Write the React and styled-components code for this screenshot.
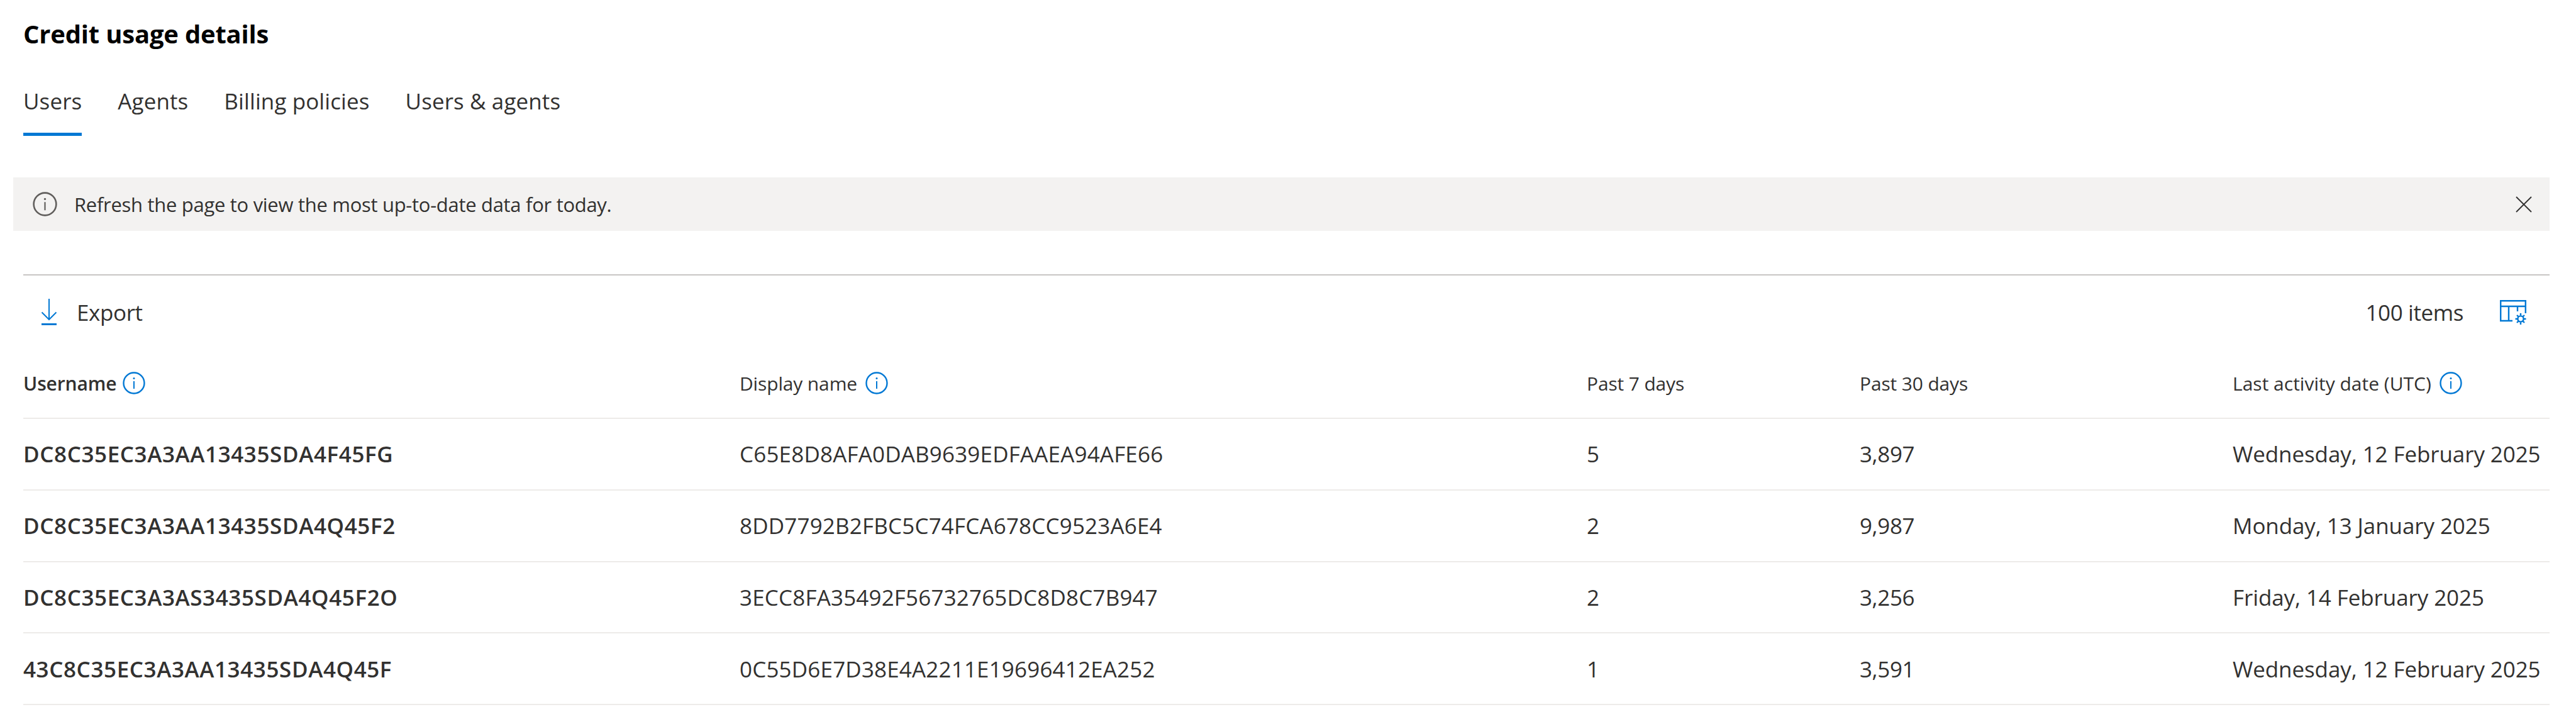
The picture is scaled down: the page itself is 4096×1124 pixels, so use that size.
import React from 'react'
import styled, { createGlobalStyle } from 'styled-components'

const GlobalStyle = createGlobalStyle`
  html, body {
    margin: 0;
    padding: 0;
    background: #fff;
  }
  body {
    font-family: "Open Sans", "Noto Sans", sans-serif;
    color: #323130;
    overflow: hidden;
  }
`

const COLUMNS = '1139px 1347px 434px 593px 504px'

const Page = styled.div`
  width: 4096px;
  height: 1124px;
  box-sizing: border-box;
  padding: 0 42px 0 37px;
  display: flex;
  flex-direction: column;
`

const Title = styled.h1`
  margin: 0;
  height: 74px;
  box-sizing: border-box;
  display: flex;
  align-items: center;
  padding-top: 32px;
  font-size: 40px;
  font-weight: 700;
  letter-spacing: -0.2px;
  color: #000;
`

const TabBar = styled.div`
  display: flex;
  gap: 57px;
  margin-top: 44px;
`

const Tab = styled.div`
  height: 98px;
  box-sizing: border-box;
  padding-top: 19px;
  display: flex;
  align-items: flex-start;
  font-size: 35px;
  line-height: 48px;
  letter-spacing: 0.1px;
  border-bottom: 5px solid ${(p) => (p.$active ? '#0078d4' : 'transparent')};
`

const Banner = styled.div`
  margin: 66px 0 0 -16px;
  height: 85px;
  background: #f3f2f1;
  display: flex;
  align-items: center;
  padding: 0 28px 0 31px;
  gap: 27px;
  font-size: 31px;
  letter-spacing: -0.3px;
`

const BannerText = styled.span`
  flex: 1;
`

const Divider = styled.div`
  margin-top: 69px;
  height: 2px;
  background: #c8c6c4;
`

const Toolbar = styled.div`
  height: 106px;
  box-sizing: border-box;
  padding: 10px 0 0 28px;
  display: flex;
  align-items: center;
  font-size: 35px;
  letter-spacing: -0.4px;
`

const ExportButton = styled.div`
  display: flex;
  align-items: center;
  gap: 31px;
`

const ItemCount = styled.div`
  margin-left: auto;
  margin-right: 58px;
`

const SettingsIcon = styled.svg`
  width: 42px;
  height: 39px;
  margin-right: 37px;
`

const Row = styled.div`
  display: grid;
  grid-template-columns: ${COLUMNS};
  align-items: center;
  height: ${(p) => (p.$head ? '122px' : '113.8px')};
  padding-top: ${(p) => (p.$head ? '10px' : '0')};
  box-sizing: border-box;
  border-bottom: 2px solid #edebe9;
`

const HeadCell = styled.div`
  display: flex;
  align-items: center;
  gap: ${(p) => (p.$strong ? '10px' : '13px')};
  font-size: 30px;
  letter-spacing: ${(p) => p.$spacing || '-0.15px'};
  font-weight: ${(p) => (p.$strong ? 600 : 400)};
`

const Cell = styled.div`
  font-size: 35px;
  letter-spacing: ${(p) => p.$spacing || '-0.4px'};
  white-space: nowrap;
  font-weight: ${(p) => (p.$strong ? 600 : 400)};
`

const Glyph = styled.svg`
  display: block;
  flex: none;
`

const InfoIcon = ({ color = '#0078d4', size = 36 }) => (
  <Glyph width={size} height={size} viewBox="0 0 36 36" fill="none">
    <circle cx="18" cy="18" r="16.5" stroke={color} strokeWidth="2.4" />
    <rect x="17" y="15" width="2" height="12" fill={color} />
    <circle cx="18" cy="10.5" r="1.5" fill={color} />
  </Glyph>
)

const CloseIcon = () => (
  <Glyph width="26" height="26" viewBox="0 0 26 26" fill="none">
    <path d="M1 1l24 24M25 1L1 25" stroke="#323130" strokeWidth="1.8" />
  </Glyph>
)

const ExportIcon = () => (
  <Glyph width="26" height="43" viewBox="0 0 26 43" fill="none">
    <path d="M13 0v33M1.5 21.5L13 33l11.5-11.5" stroke="#0078d4" strokeWidth="2" />
    <rect x="1" y="39" width="24" height="3" fill="#0078d4" />
  </Glyph>
)

const rows = [
  ['DC8C35EC3A3AA13435SDA4F45FG', 'C65E8D8AFA0DAB9639EDFAAEA94AFE66', '5', '3,897', 'Wednesday, 12 February 2025'],
  ['DC8C35EC3A3AA13435SDA4Q45F2', '8DD7792B2FBC5C74FCA678CC9523A6E4', '2', '9,987', 'Monday, 13 January 2025'],
  ['DC8C35EC3A3AS3435SDA4Q45F2O', '3ECC8FA35492F56732765DC8D8C7B947', '2', '3,256', 'Friday, 14 February 2025'],
  ['43C8C35EC3A3AA13435SDA4Q45F', '0C55D6E7D38E4A2211E19696412EA252', '1', '3,591', 'Wednesday, 12 February 2025']
]

const App = () => {
  return (
    <Page>
      <GlobalStyle />
      <Title>Credit usage details</Title>
      <TabBar>
        <Tab $active>Users</Tab>
        <Tab>Agents</Tab>
        <Tab>Billing policies</Tab>
        <Tab>Users &amp; agents</Tab>
      </TabBar>
      <Banner>
        <InfoIcon color="#605e5c" size={39} />
        <BannerText>Refresh the page to view the most up-to-date data for today.</BannerText>
        <CloseIcon />
      </Banner>
      <Divider />
      <Toolbar>
        <ExportButton>
          <ExportIcon />
          Export
        </ExportButton>
        <ItemCount>100 items</ItemCount>
        <SettingsIcon viewBox="0 0 42 39" fill="none">
          <path d="M20 33H1.2V1.2h39.6V21" stroke="#0078d4" strokeWidth="2.4" />
          <path d="M1.2 10h39.6M14 10v23M28 10v8" stroke="#0078d4" strokeWidth="2.4" />
          <circle cx="33" cy="30" r="4.6" stroke="#0078d4" strokeWidth="2.4" />
          <path d="M33 21v3.5M33 35.5V39M24.5 30H28M38 30h3.5M27 24l2.4 2.4M36.6 33.6L39 36M39 24l-2.4 2.4M29.4 33.6L27 36" stroke="#0078d4" strokeWidth="2.4" />
        </SettingsIcon>
      </Toolbar>
      <Row $head>
        <HeadCell $strong>Username <InfoIcon /></HeadCell>
        <HeadCell>Display name <InfoIcon /></HeadCell>
        <HeadCell>Past 7 days</HeadCell>
        <HeadCell>Past 30 days</HeadCell>
        <HeadCell $spacing="0px">Last activity date (UTC) <InfoIcon /></HeadCell>
      </Row>
      {rows.map((row) => (
        <Row key={row[0]}>
          <Cell $strong $spacing="0.6px">{row[0]}</Cell>
          <Cell $spacing="0.17px">{row[1]}</Cell>
          <Cell>{row[2]}</Cell>
          <Cell>{row[3]}</Cell>
          <Cell $spacing="-0.1px">{row[4]}</Cell>
        </Row>
      ))}
    </Page>
  )
}

export default App
